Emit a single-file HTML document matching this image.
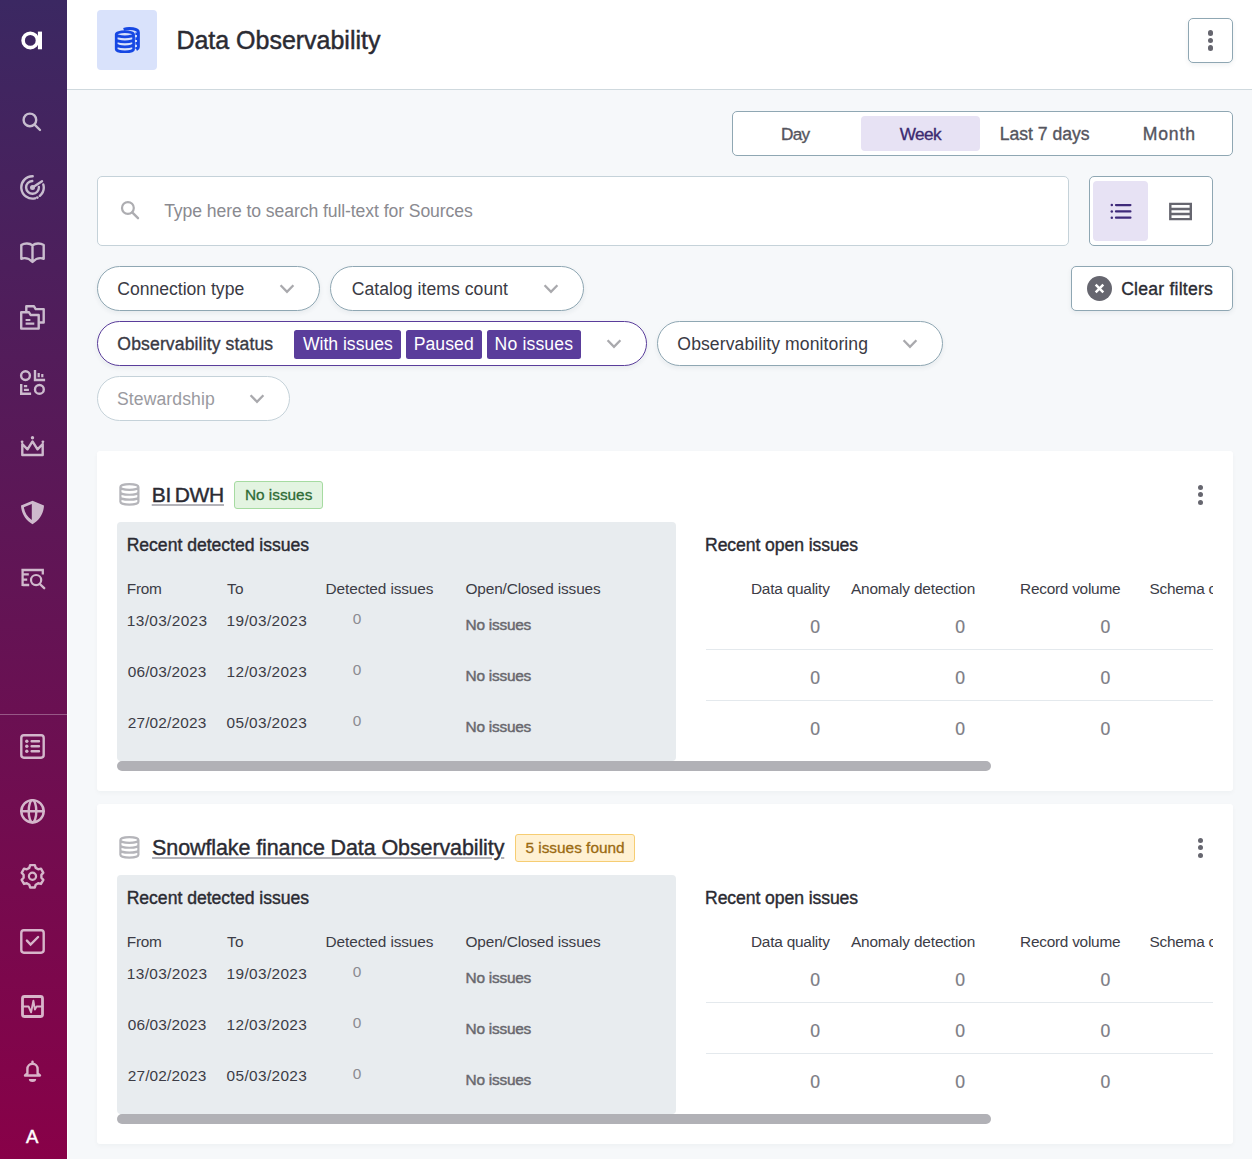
<!DOCTYPE html>
<html lang="en">
<head>
<meta charset="utf-8">
<title>Data Observability</title>
<style>
*{box-sizing:border-box;margin:0;padding:0}
html,body{width:1252px;height:1159px;overflow:hidden}
body{font-family:"Liberation Sans",sans-serif;background:#f6f8fa;color:#2b2b33;position:relative}
.a{position:absolute}
.t{position:absolute;white-space:nowrap;line-height:1}
#side{position:absolute;left:0;top:0;width:67px;height:1159px;background:linear-gradient(180deg,#3b2862 0%,#880148 100%)}
#side svg{position:absolute;left:0;top:0}
#side .div{position:absolute;left:0;top:714px;width:67px;height:1px;background:rgba(255,255,255,.3)}
#head{position:absolute;left:67px;top:0;width:1185px;height:90px;background:#fff;border-bottom:1px solid #cfd9de}
#tile{position:absolute;left:97px;top:10px;width:60px;height:60px;border-radius:4px;background:#d9e2fb}
.btn{position:absolute;background:#fff;border:1px solid #8fa7b3;border-radius:5px;box-shadow:0 2px 5px rgba(30,50,70,.07)}
.pill{position:absolute;height:45px;border:1px solid #8fa7b3;border-radius:23px;background:#fff;box-shadow:0 2px 5px rgba(30,50,70,.07)}
.chip{position:absolute;top:329.5px;height:29px;background:#5a3d9b;border-radius:2.5px}
.card{position:absolute;left:97px;width:1136px;height:340px;background:#fff;border-radius:3px;box-shadow:0 2px 4px rgba(30,50,70,.035)}
.panel{position:absolute;left:117px;width:559px;height:239px;background:#e8ecef;border-radius:4px}
.sb{position:absolute;left:117px;width:874px;height:10px;border-radius:5px;background:#b1b1b6}
.hr{position:absolute;left:706px;width:507px;height:1px;background:#e4e9ed}
.dot{position:absolute;width:5.4px;height:5.4px;border-radius:50%;background:#66666f}
svg.i{position:absolute;overflow:visible}
</style>
</head>
<body>
<div id="side"><svg width="67" height="1159" viewBox="0 0 67 1159" fill="none" stroke="#fff" stroke-width="2.4" stroke-linecap="round" stroke-linejoin="round">
<g transform="translate(12,20)"><circle cx="18.3" cy="20.4" r="7.2" fill="none" stroke="#fff" stroke-width="3.6"/><rect x="25.9" y="11.6" width="4.1" height="17.7" fill="#fff" stroke="none"/></g>
<g transform="translate(12,102)" opacity="0.7"><circle cx="17.9" cy="17.9" r="6.3"/><path d="M22.6 22.6L28 28"/></g>
<g transform="translate(12,167)" opacity="0.7"><path d="M20.70 9.20A11.2 11.2 0 1 0 23.02 31.31"/><path d="M27.85 28.85A11.2 11.2 0 0 0 31.32 17.50"/><path d="M20.28 14.00A6.4 6.4 0 1 0 26.89 20.07"/><circle cx="20.5" cy="20.4" r="2.5" fill="#fff" stroke="none"/><path d="M20.5 20.4L30 14.2"/><circle cx="25.3" cy="30.6" r="1.4" fill="#fff" stroke="none"/></g>
<g transform="translate(12,232)" opacity="0.7"><path d="M20.5 13.4C17.5 10.9 12.6 10.9 9.3 13V26.8C12.4 25.6 16.8 26.2 20.5 30C24.2 26.2 28.6 25.6 31.7 26.8V13C28.4 10.9 23.5 10.9 20.5 13.4ZM20.5 13.4V29.5"/></g>
<g transform="translate(12,297)" opacity="0.7"><path d="M9.2 15.2H16.9L18.6 18H26.7V31.6H9.2Z"/><path d="M14.3 14.2V9.3H22L23.7 12.1H31.7V25.5H27.9"/><path d="M13.6 23H18.4M13.6 26.6H22.3" stroke-width="2.2" stroke-linecap="butt"/></g>
<g transform="translate(12,362)" opacity="0.7"><circle cx="13.5" cy="13.6" r="4.4"/><circle cx="27.4" cy="27.4" r="4.4"/><path d="M23 8.1V18H33.1M9.2 21.9V31.8H19.1" stroke-linecap="butt" stroke-linejoin="miter"/><path d="M26.7 11V15.3M30.3 11.9V15.3M11.9 24.2H15.2M11.9 27.8H16.9" stroke-linecap="butt" stroke-width="2.2"/></g>
<g transform="translate(12,426)" opacity="0.7"><path d="M10.3 18V29H30.7V18L25.5 23.3L20.5 15.4L15.5 23.3Z"/><circle cx="10.1" cy="15.8" r="1.4" fill="#fff" stroke="none"/><circle cx="20.5" cy="11.7" r="1.7" fill="#fff" stroke="none"/><circle cx="30.9" cy="15.8" r="1.4" fill="#fff" stroke="none"/></g>
<g transform="translate(12,492)" opacity="0.7"><path fill-rule="evenodd" fill="#fff" stroke="none" d="M20.5 8.8L32 13.6C31.6 22 27.2 28.2 20.5 32.2C13.8 28.2 9.4 22 9 13.6ZM19.8 11.9L11.9 15.3C12.6 20.6 15.2 24.8 19.8 28.1Z"/></g>
<g transform="translate(12,558)" opacity="0.7"><path d="M10.6 10.7V28.1M9.4 12H31.9M30.8 12V16.5M10.6 16.4H16.8M10.6 21.6H15.2M10.6 27H17.2" stroke-linecap="butt" stroke-width="2.3"/><circle cx="24.1" cy="22.1" r="5.1" stroke-width="2.2"/><path d="M27.8 26L32.2 30.2"/></g>
<g transform="translate(12,726)" opacity="0.7"><rect x="9.3" y="9.3" width="22.4" height="22.4" rx="2.6"/><path d="M19.6 15.3H27M19.6 20.3H27M19.6 25.3H27"/><circle cx="14.8" cy="15.3" r="1.7" fill="#fff" stroke="none"/><circle cx="14.8" cy="20.3" r="1.7" fill="#fff" stroke="none"/><circle cx="14.8" cy="25.3" r="1.7" fill="#fff" stroke="none"/></g>
<g transform="translate(12,791)" opacity="0.7"><circle cx="20.5" cy="20.3" r="11.2"/><ellipse cx="20.5" cy="20.3" rx="3.8" ry="11.2"/><path d="M9.3 20.3H31.7"/></g>
<g transform="translate(12,856)" opacity="0.7"><path d="M23.73 11.90 L22.87 9.15 L18.13 9.15 L17.27 11.90 L14.84 13.31 L12.03 12.67 L9.66 16.78 L11.61 18.89 L11.61 21.71 L9.66 23.82 L12.03 27.93 L14.84 27.29 L17.27 28.70 L18.13 31.45 L22.87 31.45 L23.73 28.70 L26.16 27.29 L28.97 27.93 L31.34 23.82 L29.39 21.71 L29.39 18.89 L31.34 16.78 L28.97 12.67 L26.16 13.31Z"/><circle cx="20.5" cy="20.3" r="3.6" stroke-width="2.2"/></g>
<g transform="translate(12,921)" opacity="0.7"><rect x="9.3" y="9.3" width="22.4" height="22.4" rx="2.6"/><path d="M14.9 19.6L18.6 23.6L26.1 16" stroke-linejoin="miter"/></g>
<g transform="translate(12,986)" opacity="0.7"><rect x="10.5" y="10.5" width="20" height="20" rx="2" stroke-width="2.8"/><path d="M10.5 20.5H16.6L19.1 26.3L21.4 14.6L22.9 23.6L24.6 20.5H30.5" stroke-width="1.9"/></g>
<g transform="translate(12,1051)" opacity="0.7"><path d="M20.5 10.6V12.4M15.4 22.4V17.9A5.1 5.1 0 0 1 25.6 17.9V22.4L28 24.5H13Z"/><path d="M16.8 27.9H24.2A3.7 3 0 0 1 16.8 27.9Z" fill="#fff" stroke="none"/></g>
</svg><div class="div"></div></div>
<div id="head"></div>
<div class="a" style="left:67px;top:90px;width:1px;height:1069px;background:#fff"></div>
<div id="tile"></div>
<svg class="i" style="left:107px;top:20px" width="40" height="40" viewBox="0 0 40 40">
<path d="M16.6 9.3C22 7.6 31.4 8.6 31.4 12.4V27C31.4 28.4 30.6 29.2 29.4 29.7" fill="none" stroke="#1647e3" stroke-width="2.9" stroke-linecap="butt"/>
<path d="M29.2 12.5V29" fill="none" stroke="#1647e3" stroke-width="1.6" stroke-dasharray="2.6 2.2"/>
<path d="M9.2 14.3A8.7 2.6 0 1 0 26.599999999999998 14.3A8.7 2.6 0 1 0 9.2 14.3M9.2 19.25A8.7 2.6 0 0 0 26.599999999999998 19.25M9.2 24.200000000000003A8.7 2.6 0 0 0 26.599999999999998 24.200000000000003M9.2 29.150000000000002A8.7 2.6 0 0 0 26.599999999999998 29.150000000000002M9.2 14.3V29.150000000000002M26.599999999999998 14.3V29.150000000000002" fill="none" stroke="#1647e3" stroke-width="2.7"/>
</svg>
<div class="btn" style="left:1188px;top:18px;width:45px;height:45px"></div>
<div class="dot" style="left:1207.8px;top:30.3px"></div><div class="dot" style="left:1207.8px;top:37.8px"></div><div class="dot" style="left:1207.8px;top:45.3px"></div>

<div class="btn" style="left:732px;top:111px;width:501px;height:45px;box-shadow:none"></div>
<div class="a" style="left:861px;top:116px;width:119px;height:35px;border-radius:4px;background:#e7e2f4"></div>
<div class="a" style="left:97px;top:176px;width:972px;height:70px;border:1px solid #c5d2d9;border-radius:5px;background:#fff"></div>
<svg class="i" style="left:117px;top:197px" width="26" height="26" viewBox="0 0 26 26"><circle cx="10.9" cy="11" r="5.9" fill="none" stroke="#adadb1" stroke-width="2.2"/><path d="M15.2 15.4L21 21.2" stroke="#adadb1" stroke-width="2.4" stroke-linecap="round"/></svg>
<div class="btn" style="left:1089px;top:176px;width:124px;height:70px;box-shadow:none"></div>
<div class="a" style="left:1093px;top:181px;width:55px;height:60px;border-radius:4px;background:#e7e2f4"></div>
<svg class="i" style="left:1100px;top:191px" width="40" height="40" viewBox="0 0 40 40"><path d="M16 14.1H30.4M16 20.4H30.4M16 26.7H30.4" stroke="#3f2a7a" stroke-width="2.3" stroke-linecap="round"/><circle cx="11.8" cy="14.1" r="1.25" fill="#3f2a7a"/><circle cx="11.8" cy="20.4" r="1.25" fill="#3f2a7a"/><circle cx="11.8" cy="26.7" r="1.25" fill="#3f2a7a"/></svg>
<svg class="i" style="left:1160px;top:191px" width="40" height="40" viewBox="0 0 40 40"><path d="M10.3 12.9H30.8V28.1H10.3ZM10.3 18H30.8M10.3 23H30.8" fill="none" stroke="#66666f" stroke-width="2.4"/></svg>
<div class="pill" style="left:97px;top:266px;width:223px"></div><svg class="i" style="left:276.8px;top:278.5px" width="20" height="20" viewBox="0 0 20 20"><path d="M3.6 6.2L10 12.8L16.4 6.2" fill="none" stroke="#a9a9ad" stroke-width="2.3"/></svg>
<div class="pill" style="left:330px;top:266px;width:254px"></div><svg class="i" style="left:540.6px;top:278.5px" width="20" height="20" viewBox="0 0 20 20"><path d="M3.6 6.2L10 12.8L16.4 6.2" fill="none" stroke="#a9a9ad" stroke-width="2.3"/></svg>
<div class="btn" style="left:1071px;top:266px;width:162px;height:45px"></div>
<svg class="i" style="left:1087px;top:276px" width="25" height="25" viewBox="0 0 25 25"><circle cx="12.5" cy="12.5" r="12.5" fill="#66666f"/><path d="M8.7 8.7L16.3 16.3M16.3 8.7L8.7 16.3" stroke="#fff" stroke-width="2.5"/></svg>
<div class="pill" style="left:97px;top:321px;width:550px;border-color:#5a3d9b"></div><svg class="i" style="left:603.5px;top:333.5px" width="20" height="20" viewBox="0 0 20 20"><path d="M3.6 6.2L10 12.8L16.4 6.2" fill="none" stroke="#a9a9ad" stroke-width="2.3"/></svg>
<div class="chip" style="left:294.1px;width:107px"></div>
<div class="chip" style="left:406.2px;width:75.8px"></div>
<div class="chip" style="left:487px;width:94px"></div>
<div class="pill" style="left:657px;top:321px;width:286px"></div><svg class="i" style="left:899.7px;top:333.5px" width="20" height="20" viewBox="0 0 20 20"><path d="M3.6 6.2L10 12.8L16.4 6.2" fill="none" stroke="#a9a9ad" stroke-width="2.3"/></svg>
<div class="pill" style="left:97px;top:376px;width:193px;border-color:#c5d2d9;box-shadow:none"></div><svg class="i" style="left:246.5px;top:388.5px" width="20" height="20" viewBox="0 0 20 20"><path d="M3.6 6.2L10 12.8L16.4 6.2" fill="none" stroke="#a9a9ad" stroke-width="2.3"/></svg>
<div class="card" style="top:451px"></div>
<svg class="i" style="left:109px;top:474px" width="40" height="40" viewBox="0 0 40 40"><path d="M11.399999999999999 13.0A9 2.8 0 1 0 29.4 13.0A9 2.8 0 1 0 11.399999999999999 13.0M11.399999999999999 17.95A9 2.8 0 0 0 29.4 17.95M11.399999999999999 22.9A9 2.8 0 0 0 29.4 22.9M11.399999999999999 27.85A9 2.8 0 0 0 29.4 27.85M11.399999999999999 13.0V27.85M29.4 13.0V27.85" fill="none" stroke="#b5b5ba" stroke-width="2.2"/></svg>
<div class="a" style="left:234px;top:481px;width:89px;height:28px;border:1px solid #a6dba1;border-radius:3px;background:#e3f4e1"></div>
<div class="dot" style="left:1197.7px;top:484.6px"></div><div class="dot" style="left:1197.7px;top:492.05px"></div><div class="dot" style="left:1197.7px;top:499.5px"></div>
<div class="panel" style="top:522px"></div>
<div class="sb" style="top:761px"></div>
<div class="hr" style="top:649px"></div><div class="hr" style="top:700px"></div>
<div class="card" style="top:804px"></div>
<svg class="i" style="left:109px;top:827px" width="40" height="40" viewBox="0 0 40 40"><path d="M11.399999999999999 13.0A9 2.8 0 1 0 29.4 13.0A9 2.8 0 1 0 11.399999999999999 13.0M11.399999999999999 17.95A9 2.8 0 0 0 29.4 17.95M11.399999999999999 22.9A9 2.8 0 0 0 29.4 22.9M11.399999999999999 27.85A9 2.8 0 0 0 29.4 27.85M11.399999999999999 13.0V27.85M29.4 13.0V27.85" fill="none" stroke="#b5b5ba" stroke-width="2.2"/></svg>
<div class="a" style="left:515px;top:834px;width:120px;height:28px;border:1px solid #f6cd73;border-radius:3px;background:#fff1d3"></div>
<div class="dot" style="left:1197.7px;top:837.6px"></div><div class="dot" style="left:1197.7px;top:845.05px"></div><div class="dot" style="left:1197.7px;top:852.5px"></div>
<div class="panel" style="top:875px"></div>
<div class="sb" style="top:1114px"></div>
<div class="hr" style="top:1002px"></div><div class="hr" style="top:1053px"></div>
<div class="t" style="left:176.45px;top:28px;font-size:25px;color:#2b2b33;letter-spacing:-0.018px;-webkit-text-stroke:0.45px #2b2b33;">Data Observability</div>
<div class="t" style="left:781.00px;top:126px;font-size:17.2px;color:#55555e;letter-spacing:-0.705px;-webkit-text-stroke:0.35px #55555e;">Day</div>
<div class="t" style="left:899.80px;top:126px;font-size:17.2px;color:#3c2a70;letter-spacing:-0.619px;-webkit-text-stroke:0.35px #3c2a70;">Week</div>
<div class="t" style="left:999.77px;top:126px;font-size:17.6px;color:#55555e;letter-spacing:-0.027px;-webkit-text-stroke:0.35px #55555e;">Last 7 days</div>
<div class="t" style="left:1142.77px;top:126px;font-size:17.6px;color:#55555e;letter-spacing:0.828px;-webkit-text-stroke:0.35px #55555e;">Month</div>
<div class="t" style="left:164.17px;top:203px;font-size:17.6px;color:#8a8a90;letter-spacing:-0.083px;">Type here to search full-text for Sources</div>
<div class="t" style="left:117.37px;top:281px;font-size:17.6px;color:#3a3a44;letter-spacing:-0.024px;">Connection type</div>
<div class="t" style="left:351.77px;top:281px;font-size:17.6px;color:#3a3a44;letter-spacing:0.040px;">Catalog items count</div>
<div class="t" style="left:117.37px;top:336px;font-size:17.6px;color:#3a3a44;letter-spacing:0.120px;-webkit-text-stroke:0.35px #3a3a44;">Observability status</div>
<div class="t" style="left:302.97px;top:336px;font-size:17.6px;color:#fff;letter-spacing:-0.014px;">With issues</div>
<div class="t" style="left:413.67px;top:336px;font-size:17.6px;color:#fff;letter-spacing:0.089px;">Paused</div>
<div class="t" style="left:494.57px;top:336px;font-size:17.6px;color:#fff;letter-spacing:0.146px;">No issues</div>
<div class="t" style="left:677.37px;top:336px;font-size:17.6px;color:#3a3a44;letter-spacing:0.082px;">Observability monitoring</div>
<div class="t" style="left:116.97px;top:391px;font-size:17.6px;color:#9a9aa0;letter-spacing:0.089px;">Stewardship</div>
<div class="t" style="left:1121.17px;top:281px;font-size:17.6px;color:#2b2b33;letter-spacing:0.221px;-webkit-text-stroke:0.35px #2b2b33;">Clear filters</div>
<div class="t" style="left:26.10px;top:1128px;font-size:18.5px;color:#fff;-webkit-text-stroke:0.5px #fff;">A</div>
<div class="t" style="left:151.73px;top:484px;font-size:21px;color:#2b2b33;letter-spacing:-0.256px;word-spacing:-2px;-webkit-text-stroke:0.4px #2b2b33;text-decoration:underline;text-decoration-color:#b3b3b9;text-decoration-thickness:2px;text-underline-offset:2px;">BI DWH</div>
<div class="t" style="left:244.92px;top:487px;font-size:15.4px;color:#2f6b35;letter-spacing:-0.017px;-webkit-text-stroke:0.3px #2f6b35;">No issues</div>
<div class="t" style="left:126.67px;top:537px;font-size:17.6px;color:#2b2b33;letter-spacing:-0.023px;-webkit-text-stroke:0.4px #2b2b33;">Recent detected issues</div>
<div class="t" style="left:705.07px;top:537px;font-size:17.6px;color:#2b2b33;letter-spacing:-0.089px;-webkit-text-stroke:0.4px #2b2b33;">Recent open issues</div>
<div class="t" style="left:126.82px;top:581px;font-size:15.4px;color:#3c3c46;letter-spacing:-0.294px;">From</div>
<div class="t" style="left:226.92px;top:581px;font-size:15.4px;color:#3c3c46;letter-spacing:0.275px;">To</div>
<div class="t" style="left:325.62px;top:581px;font-size:15.4px;color:#3c3c46;letter-spacing:-0.120px;">Detected issues</div>
<div class="t" style="left:465.52px;top:581px;font-size:15.4px;color:#3c3c46;letter-spacing:-0.153px;">Open/Closed issues</div>
<div class="t" style="left:750.92px;top:581px;font-size:15.4px;color:#3c3c46;letter-spacing:-0.213px;">Data quality</div>
<div class="t" style="left:850.92px;top:581px;font-size:15.4px;color:#3c3c46;letter-spacing:-0.143px;">Anomaly detection</div>
<div class="t" style="left:1020.02px;top:581px;font-size:15.4px;color:#3c3c46;letter-spacing:-0.248px;">Record volume</div>
<div class="t" style="left:1149.42px;top:581px;font-size:15.4px;color:#3c3c46;letter-spacing:-0.231px;width:63.58px;overflow:hidden">Schema changes</div>
<div class="t" style="left:126.82px;top:613px;font-size:15.4px;color:#3c3c46;letter-spacing:0.357px;">13/03/2023</div>
<div class="t" style="left:226.62px;top:613px;font-size:15.4px;color:#3c3c46;letter-spacing:0.357px;">19/03/2023</div>
<div class="t" style="left:352.72px;top:611px;font-size:15.4px;color:#8b8b91;">0</div>
<div class="t" style="left:465.52px;top:617px;font-size:15.4px;color:#68686e;letter-spacing:-0.230px;-webkit-text-stroke:0.45px #68686e;">No issues</div>
<div class="t" style="left:810.37px;top:619px;font-size:17.6px;color:#7c7c84;-webkit-text-stroke:0.2px #7c7c84;">0</div>
<div class="t" style="left:955.37px;top:619px;font-size:17.6px;color:#7c7c84;-webkit-text-stroke:0.2px #7c7c84;">0</div>
<div class="t" style="left:1100.57px;top:619px;font-size:17.6px;color:#7c7c84;-webkit-text-stroke:0.2px #7c7c84;">0</div>
<div class="t" style="left:127.72px;top:664px;font-size:15.4px;color:#3c3c46;letter-spacing:0.168px;">06/03/2023</div>
<div class="t" style="left:226.62px;top:664px;font-size:15.4px;color:#3c3c46;letter-spacing:0.357px;">12/03/2023</div>
<div class="t" style="left:352.72px;top:662px;font-size:15.4px;color:#8b8b91;">0</div>
<div class="t" style="left:465.52px;top:668px;font-size:15.4px;color:#68686e;letter-spacing:-0.230px;-webkit-text-stroke:0.45px #68686e;">No issues</div>
<div class="t" style="left:810.37px;top:670px;font-size:17.6px;color:#7c7c84;-webkit-text-stroke:0.2px #7c7c84;">0</div>
<div class="t" style="left:955.37px;top:670px;font-size:17.6px;color:#7c7c84;-webkit-text-stroke:0.2px #7c7c84;">0</div>
<div class="t" style="left:1100.57px;top:670px;font-size:17.6px;color:#7c7c84;-webkit-text-stroke:0.2px #7c7c84;">0</div>
<div class="t" style="left:127.72px;top:715px;font-size:15.4px;color:#3c3c46;letter-spacing:0.168px;">27/02/2023</div>
<div class="t" style="left:226.62px;top:715px;font-size:15.4px;color:#3c3c46;letter-spacing:0.357px;">05/03/2023</div>
<div class="t" style="left:352.72px;top:713px;font-size:15.4px;color:#8b8b91;">0</div>
<div class="t" style="left:465.52px;top:719px;font-size:15.4px;color:#68686e;letter-spacing:-0.230px;-webkit-text-stroke:0.45px #68686e;">No issues</div>
<div class="t" style="left:810.37px;top:721px;font-size:17.6px;color:#7c7c84;-webkit-text-stroke:0.2px #7c7c84;">0</div>
<div class="t" style="left:955.37px;top:721px;font-size:17.6px;color:#7c7c84;-webkit-text-stroke:0.2px #7c7c84;">0</div>
<div class="t" style="left:1100.57px;top:721px;font-size:17.6px;color:#7c7c84;-webkit-text-stroke:0.2px #7c7c84;">0</div>
<div class="t" style="left:152.09px;top:838px;font-size:21.5px;color:#2b2b33;letter-spacing:-0.109px;-webkit-text-stroke:0.4px #2b2b33;text-decoration:underline;text-decoration-color:#b3b3b9;text-decoration-thickness:2px;text-underline-offset:2px;">Snowflake finance Data Observability</div>
<div class="t" style="left:525.42px;top:840px;font-size:15.4px;color:#9a6a12;letter-spacing:-0.002px;-webkit-text-stroke:0.3px #9a6a12;">5 issues found</div>
<div class="t" style="left:126.67px;top:890px;font-size:17.6px;color:#2b2b33;letter-spacing:-0.023px;-webkit-text-stroke:0.4px #2b2b33;">Recent detected issues</div>
<div class="t" style="left:705.07px;top:890px;font-size:17.6px;color:#2b2b33;letter-spacing:-0.089px;-webkit-text-stroke:0.4px #2b2b33;">Recent open issues</div>
<div class="t" style="left:126.82px;top:934px;font-size:15.4px;color:#3c3c46;letter-spacing:-0.294px;">From</div>
<div class="t" style="left:226.92px;top:934px;font-size:15.4px;color:#3c3c46;letter-spacing:0.275px;">To</div>
<div class="t" style="left:325.62px;top:934px;font-size:15.4px;color:#3c3c46;letter-spacing:-0.120px;">Detected issues</div>
<div class="t" style="left:465.52px;top:934px;font-size:15.4px;color:#3c3c46;letter-spacing:-0.153px;">Open/Closed issues</div>
<div class="t" style="left:750.92px;top:934px;font-size:15.4px;color:#3c3c46;letter-spacing:-0.213px;">Data quality</div>
<div class="t" style="left:850.92px;top:934px;font-size:15.4px;color:#3c3c46;letter-spacing:-0.143px;">Anomaly detection</div>
<div class="t" style="left:1020.02px;top:934px;font-size:15.4px;color:#3c3c46;letter-spacing:-0.248px;">Record volume</div>
<div class="t" style="left:1149.42px;top:934px;font-size:15.4px;color:#3c3c46;letter-spacing:-0.231px;width:63.58px;overflow:hidden">Schema changes</div>
<div class="t" style="left:126.82px;top:966px;font-size:15.4px;color:#3c3c46;letter-spacing:0.357px;">13/03/2023</div>
<div class="t" style="left:226.62px;top:966px;font-size:15.4px;color:#3c3c46;letter-spacing:0.357px;">19/03/2023</div>
<div class="t" style="left:352.72px;top:964px;font-size:15.4px;color:#8b8b91;">0</div>
<div class="t" style="left:465.52px;top:970px;font-size:15.4px;color:#68686e;letter-spacing:-0.230px;-webkit-text-stroke:0.45px #68686e;">No issues</div>
<div class="t" style="left:810.37px;top:972px;font-size:17.6px;color:#7c7c84;-webkit-text-stroke:0.2px #7c7c84;">0</div>
<div class="t" style="left:955.37px;top:972px;font-size:17.6px;color:#7c7c84;-webkit-text-stroke:0.2px #7c7c84;">0</div>
<div class="t" style="left:1100.57px;top:972px;font-size:17.6px;color:#7c7c84;-webkit-text-stroke:0.2px #7c7c84;">0</div>
<div class="t" style="left:127.72px;top:1017px;font-size:15.4px;color:#3c3c46;letter-spacing:0.168px;">06/03/2023</div>
<div class="t" style="left:226.62px;top:1017px;font-size:15.4px;color:#3c3c46;letter-spacing:0.357px;">12/03/2023</div>
<div class="t" style="left:352.72px;top:1015px;font-size:15.4px;color:#8b8b91;">0</div>
<div class="t" style="left:465.52px;top:1021px;font-size:15.4px;color:#68686e;letter-spacing:-0.230px;-webkit-text-stroke:0.45px #68686e;">No issues</div>
<div class="t" style="left:810.37px;top:1023px;font-size:17.6px;color:#7c7c84;-webkit-text-stroke:0.2px #7c7c84;">0</div>
<div class="t" style="left:955.37px;top:1023px;font-size:17.6px;color:#7c7c84;-webkit-text-stroke:0.2px #7c7c84;">0</div>
<div class="t" style="left:1100.57px;top:1023px;font-size:17.6px;color:#7c7c84;-webkit-text-stroke:0.2px #7c7c84;">0</div>
<div class="t" style="left:127.72px;top:1068px;font-size:15.4px;color:#3c3c46;letter-spacing:0.168px;">27/02/2023</div>
<div class="t" style="left:226.62px;top:1068px;font-size:15.4px;color:#3c3c46;letter-spacing:0.357px;">05/03/2023</div>
<div class="t" style="left:352.72px;top:1066px;font-size:15.4px;color:#8b8b91;">0</div>
<div class="t" style="left:465.52px;top:1072px;font-size:15.4px;color:#68686e;letter-spacing:-0.230px;-webkit-text-stroke:0.45px #68686e;">No issues</div>
<div class="t" style="left:810.37px;top:1074px;font-size:17.6px;color:#7c7c84;-webkit-text-stroke:0.2px #7c7c84;">0</div>
<div class="t" style="left:955.37px;top:1074px;font-size:17.6px;color:#7c7c84;-webkit-text-stroke:0.2px #7c7c84;">0</div>
<div class="t" style="left:1100.57px;top:1074px;font-size:17.6px;color:#7c7c84;-webkit-text-stroke:0.2px #7c7c84;">0</div>
</body>
</html>
